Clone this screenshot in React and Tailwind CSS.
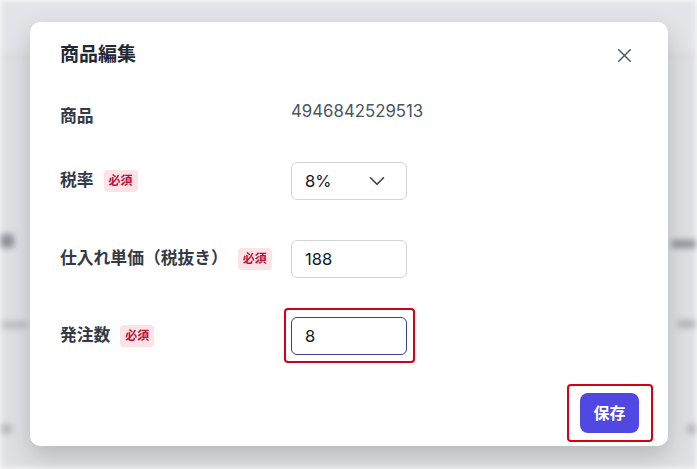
import { X, ChevronDown } from "lucide-react";

const FONT = { fontFamily: '"Inter", "Noto Sans CJK JP", sans-serif' };

function Required() {
  return (
    <span className="rounded bg-[#fde2e6] px-[5px] py-1 text-[12px] font-bold leading-[14px] text-[#b8123a]">
      必須
    </span>
  );
}

function Backdrop() {
  // blurred page behind the modal
  return (
    <div className="flex h-[469px] flex-col bg-[#dfe0e4] blur-[3px]">
      <div className="h-[56px] border-b-2 border-[#d3d5da] bg-[#e3e4e8]" />
      <div className="flex h-[196px] items-end justify-between pb-1">
        <div className="h-[14px] w-[14px] rounded bg-[#8e9096]" />
        <div className="h-[8px] w-[26px] rounded bg-[#8e9096]" />
      </div>
      <div className="flex h-[80px] items-end justify-between pb-1">
        <div className="h-[6px] w-[28px] rounded bg-[#b6b8bd]" />
        <div className="h-[8px] w-[20px] rounded bg-[#b3b5ba]" />
      </div>
      <div className="flex h-[110px] items-end justify-between pb-2">
        <div className="h-[10px] w-[12px] rounded bg-[#b6b8bd]" />
        <div className="h-[10px] w-[10px] rounded bg-[#b3b5ba]" />
      </div>
    </div>
  );
}

export default function App() {
  return (
    <div className="relative h-[469px] w-[697px] overflow-hidden" style={FONT}>
      <Backdrop />
      <div className="absolute left-[30px] top-[22px] w-[638px] rounded-[10px] bg-white px-[30px] pb-[13px] pt-[19px] shadow-[0_10px_24px_rgba(0,0,0,0.18)]">
        <div className="flex h-[28px] items-center justify-between">
          <h2 className="text-[19px] font-bold text-[#1f2937]">商品編集</h2>
          <X className="mr-[2px] h-[23px] w-[23px] text-[#4b5563]" strokeWidth={1.5} />
        </div>

        <div className="mt-[30px] flex h-[24px] items-start">
          <div className="mt-[5px] w-[231px] text-[16.8px] font-semibold leading-6 text-[#333a46]">商品</div>
          <div className="text-[16.8px] leading-6 text-[#4b5563]">4946842529513</div>
        </div>

        <div className="mt-[39px] flex items-center">
          <div className="flex w-[231px] items-center gap-[10px]">
            <span className="text-[16.8px] font-semibold text-[#333a46]">税率</span>
            <Required />
          </div>
          <div className="flex h-[38px] w-[116px] items-center justify-between rounded-md border border-[#d1d5db] pl-[13px] pr-[16px] text-[16.5px] text-[#111827]">
            <span>8%</span>
            <ChevronDown className="h-[26px] w-[26px] text-[#374151]" strokeWidth={1.5} />
          </div>
        </div>

        <div className="mt-[40px] flex items-center">
          <div className="flex w-[231px] items-center gap-[10px]">
            <span className="text-[16.8px] font-semibold text-[#333a46]">仕入れ単価（税抜き）</span>
            <Required />
          </div>
          <div className="flex h-[38px] w-[116px] items-center rounded-md border border-[#d1d5db] pl-[13px] text-[16.5px] text-[#111827]">
            188
          </div>
        </div>

        <div className="mt-[39px] flex items-center">
          <div className="flex w-[231px] items-center gap-[10px]">
            <span className="text-[16.8px] font-semibold text-[#333a46]">発注数</span>
            <Required />
          </div>
          <div className="relative">
            <div className="flex h-[38px] w-[116px] items-center rounded-md border border-[#3b3f8c] pl-[13px] text-[16.5px] text-[#111827]">
              8
            </div>
            <div className="absolute -bottom-[8px] -left-[7px] -right-[8px] -top-[9px] rounded-[4px] border-2 border-[#d0021b]" />
          </div>
        </div>

        <div className="mt-[38px] flex justify-end">
          <div className="relative mr-[-1px]">
            <button className="h-[40px] w-[59px] rounded-lg bg-[#5147e3] text-[16px] font-bold text-white">
              保存
            </button>
            <div className="absolute -bottom-[9px] -left-[13px] -right-[14px] -top-[9px] rounded-[4px] border-2 border-[#d0021b]" />
          </div>
        </div>
      </div>
    </div>
  );
}
